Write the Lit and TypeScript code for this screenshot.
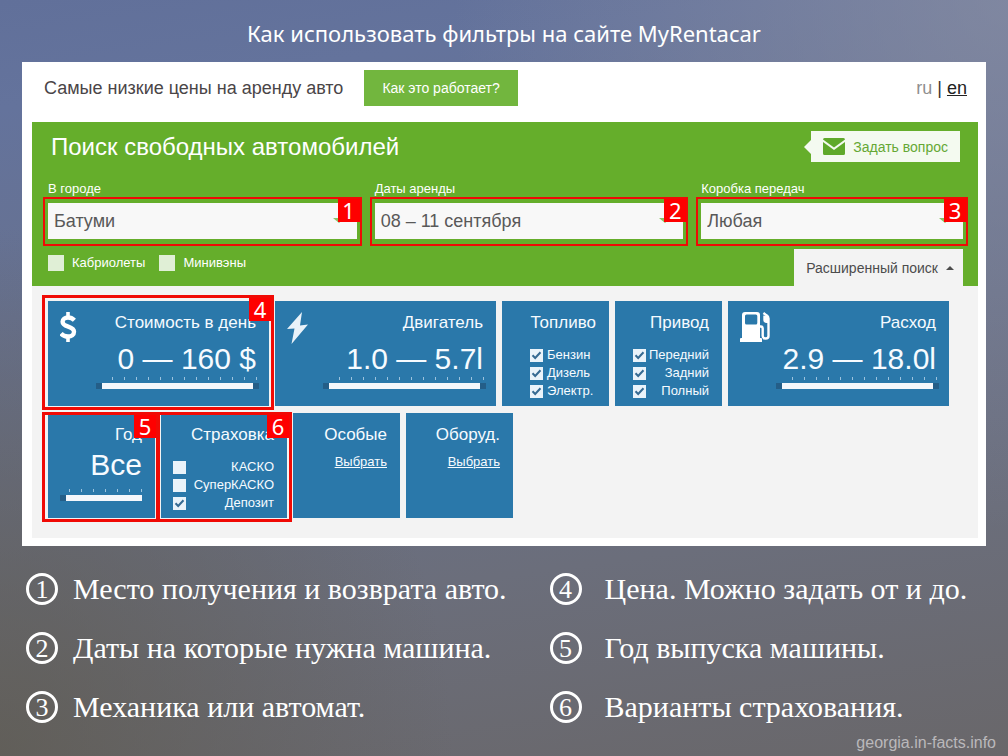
import { LitElement, html, css, svg, nothing } from "lit";
import { customElement, property } from "lit/decorators.js";

const sans = css`"Liberation Sans", Arial, sans-serif`;

const icons: Record<string, unknown> = {
  dollar: svg`<svg viewBox="0 0 30 30" width="30" height="30" aria-hidden="true">
    <path d="M8 0v6M8 24v6" fill="none" stroke="#fff" stroke-width="3.6"/>
    <path d="M14.4 8.2C12.6 6.4 10.4 5.5 8 5.5c-3.200 0-5.400 1.600-5.400 4.200 0 6 11.400 3.800 11.400 10 0 3-2.500 4.800-6 4.800-2.700 0-5.200-1-7-3" fill="none" stroke="#fff" stroke-width="4.400"/>
  </svg>`,
  bolt: svg`<svg viewBox="2 0 30 32" width="30" height="32" aria-hidden="true">
    <path d="M17 0 2 17l7.500-.6L6.500 32 23 12.600l-8 .9z" fill="#e9f2f9"/>
  </svg>`,
  pump: svg`<svg viewBox="0 0 30 30" width="30" height="30" aria-hidden="true">
    <path fill="#fff" fill-rule="evenodd" d="M5 0h12a3 3 0 0 1 3 3v23h1a1 1 0 0 1 1 1v3H0v-3a1 1 0 0 1 1-1h1V3a3 3 0 0 1 3-3zm1.500 2.600A1.500 1.500 0 0 0 5 4.100V11a1.500 1.500 0 0 0 1.500 1.500h9.300a1.500 1.500 0 0 0 1.500-1.500V4.100a1.500 1.500 0 0 0-1.500-1.500z"/>
    <path fill="none" stroke="#fff" stroke-width="2.400" stroke-linejoin="round" d="M20 14.500h.8c1.500 0 1.900.8 1.900 2V24c0 3.400 5.800 3.400 5.800 0V6.500c0-1.600-1-2.600-2.200-3.400L23.400 1"/>
    <path fill="#fff" d="M23.300 3.500 28 4v7h-1.500c-2 0-3.200-1.400-3.200-3z"/>
  </svg>`,
};

@customElement("callout-frame")
class CalloutFrame extends LitElement {
  @property() n = "";
  static styles = css`
    :host {
      position: absolute;
      box-sizing: border-box;
      border: 2px solid #f00a05;
      pointer-events: none;
    }
    .n {
      position: absolute;
      top: 0;
      right: 0;
      width: 22px;
      height: 23px;
      background: #fe0000;
      color: #fff;
      font: 22px/22px "Noto Sans", "Open Sans", sans-serif;
      text-align: center;
    }
  `;
  render() {
    return html`<span class="n">${this.n}</span>`;
  }
}

@customElement("range-scale")
class RangeScale extends LitElement {
  @property() label = "";
  @property({ type: Boolean }) single = false;
  static styles = css`
    :host {
      display: block;
    }
    .ticks {
      height: 3px;
      margin-bottom: 3px;
      background: repeating-linear-gradient(to left, #9cc3de 0 1px, transparent 1px 12px);
    }
    .pair .ticks {
      margin-left: 14px;
      margin-right: 2px;
    }
    .one .ticks {
      margin-left: 9px;
    }
    .bar {
      display: grid;
      height: 6px;
      background: #f4f7fb;
    }
    input {
      grid-area: 1 / 1;
      appearance: none;
      width: 100%;
      height: 6px;
      margin: 0;
      background: transparent;
      pointer-events: none;
    }
    input::-webkit-slider-thumb {
      appearance: none;
      width: 6px;
      height: 6px;
      background: #245e88;
      pointer-events: auto;
    }
  `;
  render() {
    return html`<div class=${this.single ? "one" : "pair"}>
      <div class="ticks"></div>
      <div class="bar">
        <input type="range" min="0" max="100" .value=${"0"} aria-label="${this.label}: от" />
        ${this.single
          ? nothing
          : html`<input type="range" min="0" max="100" .value=${"100"} aria-label="${this.label}: до" />`}
      </div>
    </div>`;
  }
}

interface Tile {
  title: string;
  size: "s" | "m" | "l";
  icon?: string;
  value?: string;
  options?: [string, boolean][];
  start?: boolean;
  link?: string;
  callout?: string;
}

const tiles: Tile[] = [
  { title: "Стоимость в день", size: "l", icon: "dollar", value: "0 — 160 $", callout: "4" },
  { title: "Двигатель", size: "l", icon: "bolt", value: "1.0 — 5.7l" },
  { title: "Топливо", size: "s", start: true, options: [["Бензин", true], ["Дизель", true], ["Электр.", true]] },
  { title: "Привод", size: "s", options: [["Передний", true], ["Задний", true], ["Полный", true]] },
  { title: "Расход", size: "l", icon: "pump", value: "2.9 — 18.0l" },
  { title: "Год", size: "s", value: "Все", callout: "5" },
  { title: "Страховка", size: "m", options: [["КАСКО", false], ["СуперКАСКО", false], ["Депозит", true]], callout: "6" },
  { title: "Особые", size: "s", link: "Выбрать" },
  { title: "Оборуд.", size: "s", link: "Выбрать" },
];

const legend: [string, string][] = [
  ["1", "Место получения и возврата авто."],
  ["4", "Цена. Можно задать от и до."],
  ["2", "Даты на которые нужна машина."],
  ["5", "Год выпуска машины."],
  ["3", "Механика или автомат."],
  ["6", "Варианты страхования."],
];

@customElement("app-root")
class AppRoot extends LitElement {
  static styles = css`
    :host {
      display: block;
      box-sizing: border-box;
      min-height: 100vh;
      font-family: ${sans};
      background:
        radial-gradient(ellipse 55% 70% at 100% 0%, rgba(142, 146, 164, 0.65), transparent),
        radial-gradient(ellipse 45% 70% at 0% 100%, rgba(94, 90, 80, 0.75), transparent),
        linear-gradient(172deg, #61709a 0%, #64739c 12%, #6b6e7b 72%, #69676a 100%);
    }
    * {
      box-sizing: border-box;
    }
    h1,
    h2,
    h3,
    p,
    ul {
      margin: 0;
      padding: 0;
      font-weight: normal;
    }
    button,
    select,
    input {
      font: inherit;
      border: 0;
      border-radius: 0;
      margin: 0;
    }
    .headline {
      padding: 17px 0 13px;
      font: 22px/32px "Noto Sans", "Open Sans", sans-serif;
      color: #fff;
      text-align: center;
    }
    .window {
      margin: 0 22px;
      padding: 0 8px 8px 10px;
      background: #fff;
    }
    .top {
      display: flex;
      align-items: center;
      height: 60px;
      padding: 0 11px 8px 12px;
      font-size: 18px;
      color: #4a4547;
    }
    .how {
      height: 36px;
      margin-left: 21px;
      padding: 0 18px;
      font-size: 14px;
      background: #72b63e;
      color: #fff;
    }
    .lang {
      margin-left: auto;
      color: #333;
    }
    .lang span {
      color: #8f8f8f;
    }
    .lang a {
      color: #222;
    }
    .search {
      padding: 9px 15px 0 16px;
      background: #65ae2b;
      color: #fff;
    }
    .search-head {
      display: flex;
      justify-content: space-between;
      align-items: center;
      padding: 0 3px;
    }
    h2 {
      font-size: 24px;
      line-height: 30px;
    }
    .ask {
      position: relative;
      display: flex;
      align-items: center;
      gap: 8px;
      height: 31px;
      padding: 0 12px;
      font-size: 14px;
      background: #f4faf0;
      color: #65a834;
    }
    .ask::before {
      content: "";
      position: absolute;
      left: -7px;
      top: 9px;
      border: solid transparent;
      border-width: 7px 7px 7px 0;
      border-right-color: #f4faf0;
    }
    .fields {
      display: grid;
      grid-template-columns: 309fr 309fr 262fr;
      gap: 18px;
      margin-top: 18px;
    }
    .field label {
      display: block;
      height: 23px;
      font-size: 13px;
      line-height: 18px;
    }
    .control {
      position: relative;
    }
    .control select,
    .control input {
      appearance: none;
      display: block;
      width: 100%;
      height: 36px;
      padding: 0 30px 0 6px;
      font-size: 18px;
      background: #f8f8f8;
      color: #595959;
    }
    .control::after {
      content: "";
      position: absolute;
      right: 12px;
      top: 15px;
      border: solid transparent;
      border-width: 5px 6px 0;
      border-top-color: #8cc265;
    }
    .control callout-frame {
      inset: -6px -5px -7px;
      z-index: 1;
    }
    .search-foot {
      display: flex;
      justify-content: space-between;
      align-items: flex-end;
      margin-top: 10px;
      font-size: 13px;
    }
    .kinds {
      display: flex;
      gap: 14px;
      align-self: flex-start;
      padding-top: 6px;
    }
    .kinds label {
      display: flex;
      align-items: center;
      gap: 8px;
      line-height: 16px;
    }
    input[type="checkbox"] {
      appearance: none;
      flex: none;
      width: 13px;
      height: 13px;
      background: #eaf3fa center / 11px 11px no-repeat;
    }
    .kinds input[type="checkbox"] {
      width: 16px;
      height: 16px;
      background-color: #e0efd6;
    }
    input[type="checkbox"]:checked {
      background-image: url("data:image/svg+xml,%3Csvg xmlns='http://www.w3.org/2000/svg' viewBox='0 0 11 11'%3E%3Cpath d='M1.500 5.200 4.200 8 9.500 2.300' fill='none' stroke='%23366a92' stroke-width='2'/%3E%3C/svg%3E");
    }
    .more {
      display: flex;
      align-items: center;
      gap: 8px;
      height: 37px;
      padding: 0 9px 0 12px;
      font-size: 14px;
      background: #f3f3f3;
      color: #4c4c4c;
    }
    .up {
      border: solid transparent;
      border-width: 0 4px 4px;
      border-bottom-color: #4c4c4c;
    }
    .tiles {
      display: flex;
      flex-wrap: wrap;
      gap: 7px 6px;
      padding: 15px 15px 20px 16px;
      background: #f3f3f3;
    }
    .tile {
      position: relative;
      height: 105px;
      padding: 11px 13px 0 12px;
      background: #2a78aa;
      color: #f6fbff;
      text-align: right;
    }
    .s {
      width: 107px;
    }
    .m {
      width: 126px;
    }
    .l {
      width: 221px;
    }
    h3 {
      font-size: 17px;
      line-height: 22px;
    }
    .icon {
      position: absolute;
      left: 12px;
      top: 11px;
      line-height: 0;
    }
    .value {
      height: 43px;
      font-size: 30px;
      line-height: 50px;
      white-space: nowrap;
    }
    .s .value {
      line-height: 38px;
    }
    .l range-scale {
      width: 163px;
      margin-left: auto;
      margin-right: -3px;
    }
    .options {
      list-style: none;
      margin-top: 12px;
      font-size: 13px;
    }
    .options label {
      display: flex;
      align-items: center;
      justify-content: space-between;
      line-height: 18px;
    }
    .s .options {
      padding-left: 6px;
    }
    .start .options {
      padding-left: 16px;
    }
    .start .options label {
      justify-content: flex-start;
      gap: 4px;
    }
    .pick {
      display: block;
      margin-top: 7px;
      font-size: 13px;
      line-height: 18px;
      color: inherit;
    }
    .tile callout-frame {
      border-width: 3px;
      z-index: 1;
    }
    .l callout-frame {
      inset: -6px -5px -4px -6px;
    }
    .s callout-frame {
      inset: -1px -4px -4px -6px;
    }
    .m callout-frame {
      inset: -1px -5px -4px -4px;
    }
    .legend {
      display: grid;
      grid-template-columns: 523fr 420fr;
      row-gap: 27px;
      padding: 27px 38px 0 26px;
      list-style: none;
      font: 30px/32px "Liberation Serif", serif;
      color: #fff;
    }
    .legend li {
      display: flex;
      gap: 15px;
      white-space: nowrap;
    }
    .legend li:nth-child(even) {
      gap: 23px;
    }
    .num {
      flex: none;
      width: 32px;
      height: 32px;
      border: 3px solid #fff;
      border-radius: 50%;
      font-size: 26px;
      line-height: 27px;
      text-align: center;
    }
    .site {
      padding: 8px 12px 0;
      font-size: 16px;
      line-height: 24px;
      text-align: right;
      color: #bab8bb;
    }
  `;

  private tile(t: Tile) {
    return html`<section class="tile ${t.size} ${t.start ? "start" : ""}">
      ${t.icon ? html`<span class="icon">${icons[t.icon]}</span>` : nothing}
      <h3>${t.title}</h3>
      ${t.value
        ? html`<p class="value">${t.value}</p>
            <range-scale .label=${t.title} ?single=${t.size === "s"}></range-scale>`
        : nothing}
      ${t.options
        ? html`<ul class="options">
            ${t.options.map(
              ([name, on]) => html`<li>
                <label><input type="checkbox" .checked=${on} /><span>${name}</span></label>
              </li>`
            )}
          </ul>`
        : nothing}
      ${t.link ? html`<a class="pick" href="#">${t.link}</a>` : nothing}
      ${t.callout ? html`<callout-frame .n=${t.callout}></callout-frame>` : nothing}
    </section>`;
  }

  render() {
    return html`
      <h1 class="headline">Как использовать фильтры на сайте MyRentacar</h1>
      <main class="window">
        <header class="top">
          <p>Самые низкие цены на аренду авто</p>
          <button class="how">Как это работает?</button>
          <nav class="lang"><span>ru</span> | <a href="#">en</a></nav>
        </header>
        <form class="search">
          <div class="search-head">
            <h2>Поиск свободных автомобилей</h2>
            <button class="ask" type="button">
              <svg viewBox="0 0 22 17" width="22" height="17" aria-hidden="true">
                <path fill="#5fa92a" d="M1.500 0h19A1.500 1.500 0 0 1 22 1.500L11 9.500 0 1.500A1.500 1.500 0 0 1 1.500 0zM0 4l11 8 11-8v11.500a1.500 1.500 0 0 1-1.500 1.500h-19A1.500 1.500 0 0 1 0 15.500z" />
              </svg>
              Задать вопрос
            </button>
          </div>
          <div class="fields">
            <div class="field">
              <label for="city">В городе</label>
              <div class="control">
                <select id="city"><option>Батуми</option></select>
                <callout-frame .n=${"1"}></callout-frame>
              </div>
            </div>
            <div class="field">
              <label for="dates">Даты аренды</label>
              <div class="control">
                <input id="dates" type="text" value="08 – 11 сентября" />
                <callout-frame .n=${"2"}></callout-frame>
              </div>
            </div>
            <div class="field">
              <label for="gear">Коробка передач</label>
              <div class="control">
                <select id="gear"><option>Любая</option></select>
                <callout-frame .n=${"3"}></callout-frame>
              </div>
            </div>
          </div>
          <div class="search-foot">
            <div class="kinds">
              <label><input type="checkbox" />Кабриолеты</label>
              <label><input type="checkbox" />Минивэны</label>
            </div>
            <button class="more" type="button">Расширенный поиск<span class="up"></span></button>
          </div>
        </form>
        <div class="tiles">${tiles.map((t) => this.tile(t))}</div>
      </main>
      <ul class="legend">
        ${legend.map(([n, text]) => html`<li><span class="num">${n}</span><span>${text}</span></li>`)}
      </ul>
      <footer class="site">georgia.in-facts.info</footer>
    `;
  }
}
